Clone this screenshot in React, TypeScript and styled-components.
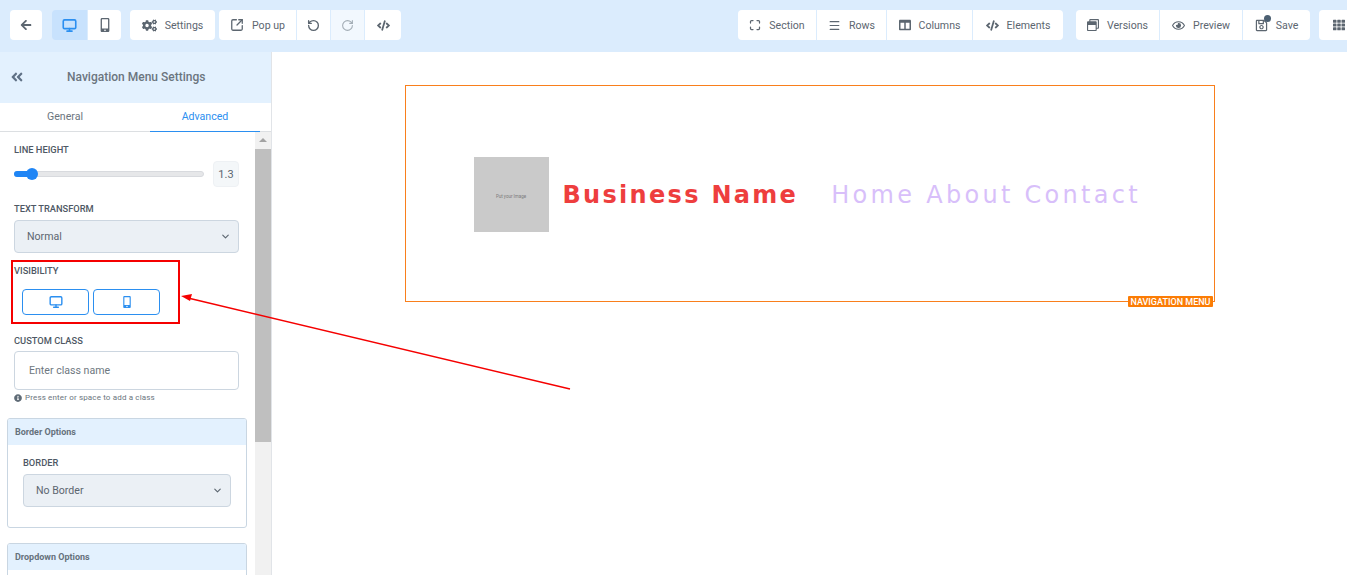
import React from 'react';
import styled, { createGlobalStyle } from 'styled-components';
import {
  ChevronDown,
  Maximize,
  Menu,
  Monitor,
  RotateCcw,
  RotateCw,
  SquareArrowOutUpRight,
} from 'lucide-react';
import {
  FaAngleDoubleLeft,
  FaArrowLeft,
  FaCode,
  FaCogs,
  FaColumns,
  FaInfoCircle,
  FaMobileAlt,
  FaRegEye,
  FaRegSave,
  FaRegWindowRestore,
  FaTh,
} from 'react-icons/fa';

const GlobalStyle = createGlobalStyle`
  html, body {
    margin: 0;
    padding: 0;
    height: 100%;
    overflow: hidden;
    background: #fff;
    font-family: Roboto, "Liberation Sans", sans-serif;
  }
  * { box-sizing: border-box; }
`;

const Page = styled.div`
  position: relative;
  width: 1347px;
  height: 575px;
  overflow: hidden;
`;

const Toolbar = styled.header`
  height: 52px;
  background: #dbecfd;
  display: flex;
  align-items: center;
  padding: 0 0 2px 10px;
  white-space: nowrap;
`;

const Group = styled.div<{ $gap?: number; $left?: number }>`
  display: flex;
  flex: none;
  gap: 1px;
  margin-right: ${(p) => p.$gap ?? 0}px;
  margin-left: ${(p) => p.$left ?? 0}px;
  border-radius: 4px;
  overflow: hidden;
`;

const ToolButton = styled.div<{ $w: number; $active?: boolean; $dim?: boolean }>`
  width: ${(p) => p.$w}px;
  height: 30px;
  flex: none;
  display: flex;
  align-items: center;
  justify-content: center;
  gap: 8px;
  font-size: 10.6px;
  color: #5c6670;
  background: ${(p) => (p.$active ? '#c8e2fd' : p.$dim ? '#f2f8fe' : '#fff')};

  svg {
    flex: none;
    color: ${(p) => (p.$active ? '#2b8ff0' : p.$dim ? '#a3adb6' : '#5c6670')};
  }
`;

const SaveIcon = styled.span`
  position: relative;
  display: flex;

  &::after {
    content: '';
    position: absolute;
    top: -4px;
    right: -3px;
    width: 7px;
    height: 7px;
    border-radius: 50%;
    background: #4c6072;
  }
`;

const Main = styled.main`
  display: flex;
  height: 523px;
`;

const Sidebar = styled.aside`
  width: 272px;
  flex: none;
  border-right: 1px solid #e1e4e8;
  display: flex;
  flex-direction: column;
  overflow: hidden;
`;

const SidebarHead = styled.div`
  height: 51px;
  flex: none;
  background: #e3f1fe;
  display: flex;
  align-items: center;
  padding: 0 0 2px 10px;
  color: #6b757e;

  svg {
    color: #5f7186;
  }
`;

const SidebarTitle = styled.div`
  font-size: 12px;
  font-weight: 500;
  margin-left: 43px;
`;

const Tabs = styled.nav`
  height: 29px;
  flex: none;
  display: flex;
  border-bottom: 1px solid #dcdfe2;
`;

const Tab = styled.div<{ $active?: boolean }>`
  width: ${(p) => (p.$active ? 110 : 130)}px;
  margin-left: ${(p) => (p.$active ? 20 : 0)}px;
  height: 29px;
  font-size: 10.6px;
  line-height: 27px;
  text-align: center;
  color: ${(p) => (p.$active ? '#2b8ff0' : '#6b757e')};
  border-bottom: 1px solid ${(p) => (p.$active ? '#2b8ff0' : 'transparent')};
`;

const SidebarBody = styled.div`
  flex: 1;
  min-height: 0;
  display: flex;
`;

const Panel = styled.div`
  width: 255px;
  flex: none;
  padding: 12px 0 0 14px;
  overflow: hidden;
`;

const Label = styled.div`
  font-size: 9.3px;
  line-height: 12px;
  font-weight: 500;
  color: #4e5864;
`;

const SliderRow = styled.div`
  display: flex;
  align-items: center;
  width: 225px;
  height: 26px;
  margin-top: 5px;
`;

const SliderTrack = styled.div`
  position: relative;
  width: 190px;
  height: 6px;
  border-radius: 3px;
  background: #e6e7e9;
  border: 1px solid #d8dade;
  margin-right: 9px;
`;

const SliderFill = styled.div`
  position: absolute;
  left: -1px;
  top: -1px;
  height: 6px;
  border-radius: 3px;
  background: #1f85f5;
`;

const SliderThumb = styled.div`
  position: absolute;
  left: 11px;
  top: -4px;
  width: 12px;
  height: 12px;
  border-radius: 50%;
  background: #1f85f5;
`;

const SliderValue = styled.div`
  width: 26px;
  height: 26px;
  border-radius: 4px;
  background: #f4f7f9;
  border: 1px solid #eef1f4;
  font-size: 11px;
  color: #5c6670;
  display: flex;
  align-items: center;
  justify-content: center;
`;

const Select = styled.div<{ $w: number; $h: number }>`
  width: ${(p) => p.$w}px;
  height: ${(p) => p.$h}px;
  margin-top: 5px;
  background: #ebf0f5;
  border: 1px solid #ccd6e0;
  border-radius: 4px;
  display: flex;
  align-items: center;
  justify-content: space-between;
  padding: 0 7px 0 12px;
  font-size: 10.6px;
  color: #5c6670;
`;

const Spaced = styled.div<{ $top: number }>`
  margin-top: ${(p) => p.$top}px;
`;

const VisibilityRow = styled.div`
  display: flex;
  gap: 4px;
  margin: 12px 0 0 8px;
`;

const VisibilityButton = styled.div`
  width: 67px;
  height: 26px;
  border: 1px solid #2b8ff0;
  border-radius: 4px;
  color: #2b8ff0;
  display: flex;
  align-items: center;
  justify-content: center;
`;

const TextField = styled.div`
  width: 225px;
  height: 39px;
  margin-top: 4px;
  border: 1px solid #ccd6e0;
  border-radius: 4px;
  display: flex;
  align-items: center;
  padding-left: 14px;
  font-size: 10.6px;
  color: #6e7780;
`;

const Hint = styled.div`
  display: flex;
  align-items: center;
  gap: 3px;
  margin-top: 2px;
  font-size: 8px;
  line-height: 12px;
  letter-spacing: 0.15px;
  color: #6b757e;

  svg {
    color: #5f6b76;
  }
`;

const OptionCard = styled.section<{ $top: number; $h: number }>`
  width: 240px;
  height: ${(p) => p.$h}px;
  margin: ${(p) => p.$top}px 0 0 -7px;
  border: 1px solid #c9d6e2;
  border-radius: 3px;
  overflow: hidden;
  flex: none;
`;

const CardHead = styled.div`
  height: 26px;
  background: #e3f1fe;
  font-size: 9px;
  font-weight: 700;
  line-height: 26px;
  padding-left: 7px;
  color: #66717c;
`;

const CardBody = styled.div`
  padding: 12px 0 0 15px;
`;

const Scrollbar = styled.div`
  width: 16px;
  flex: none;
  background: #f1f1f1;
  display: flex;
  flex-direction: column;
  align-items: center;
`;

const ScrollArrow = styled.div`
  width: 0;
  height: 0;
  margin-top: 6px;
  border-left: 4px solid transparent;
  border-right: 4px solid transparent;
  border-bottom: 4px solid #a3a3a3;
`;

const ScrollThumb = styled.div`
  width: 100%;
  height: 293px;
  margin-top: 7px;
  background: #bfbfbf;
`;

const Canvas = styled.div`
  flex: 1;
  min-width: 0;
  background: #fff;
`;

const Frame = styled.div`
  position: relative;
  width: 810px;
  height: 217px;
  margin: 33px auto 0;
  border: 1px solid #f97f1c;
  padding-left: 68px;
  display: flex;
  align-items: center;
  font-family: "DejaVu Sans", Inter, sans-serif;
`;

const LogoBox = styled.div`
  width: 75px;
  height: 75px;
  flex: none;
  margin-top: 2px;
  padding-top: 4px;
  background: #cacaca;
  display: flex;
  align-items: center;
  justify-content: center;
  font-family: Roboto, sans-serif;
  font-size: 4.5px;
  color: #7b7b7b;
`;

const BrandName = styled.div`
  margin: 2px 0 0 14px;
  font-size: 24px;
  font-weight: 700;
  letter-spacing: 2.3px;
  color: #ee3e3e;
  white-space: nowrap;
`;

const NavLinks = styled.div`
  margin: 2px 0 0 33px;
  font-size: 24px;
  font-weight: 400;
  letter-spacing: 3.3px;
  color: #d8bffa;
  white-space: nowrap;
`;

const FrameTag = styled.div`
  position: absolute;
  right: 1px;
  bottom: -6px;
  height: 11px;
  padding: 0 2px;
  background: #fb7c05;
  border-radius: 1px;
  color: #fff;
  font-family: Roboto, sans-serif;
  font-size: 9px;
  font-weight: 500;
  line-height: 12px;
`;

const Highlight = styled.div`
  position: absolute;
  left: 11px;
  top: 260px;
  width: 169px;
  height: 64px;
  border: 2px solid #f50000;
  pointer-events: none;
`;

const ArrowOverlay = styled.svg`
  position: absolute;
  left: 0;
  top: 0;
  pointer-events: none;
`;

const App = () => {
  return (
    <Page>
      <GlobalStyle />
      <Toolbar>
        <Group $gap={10}>
          <ToolButton $w={32}><FaArrowLeft size={12} /></ToolButton>
        </Group>
        <Group $gap={9}>
          <ToolButton $w={35} $active><Monitor size={15} strokeWidth={2.6} /></ToolButton>
          <ToolButton $w={33}><FaMobileAlt size={14} /></ToolButton>
        </Group>
        <Group $gap={4}>
          <ToolButton $w={85}><FaCogs size={15} />Settings</ToolButton>
        </Group>
        <Group>
          <ToolButton $w={77}><SquareArrowOutUpRight size={14} strokeWidth={2.2} />Pop up</ToolButton>
          <ToolButton $w={33}><RotateCcw size={13} strokeWidth={2.5} /></ToolButton>
          <ToolButton $w={33} $dim><RotateCw size={13} strokeWidth={2} /></ToolButton>
          <ToolButton $w={36}><FaCode size={13} /></ToolButton>
        </Group>
        <Group $left={337} $gap={13}>
          <ToolButton $w={78}><Maximize size={12} strokeWidth={2.5} />Section</ToolButton>
          <ToolButton $w={69}><Menu size={13} strokeWidth={2.2} />Rows</ToolButton>
          <ToolButton $w={85}><FaColumns size={12} />Columns</ToolButton>
          <ToolButton $w={90}><FaCode size={13} />Elements</ToolButton>
        </Group>
        <Group $gap={9}>
          <ToolButton $w={83}><FaRegWindowRestore size={12} />Versions</ToolButton>
          <ToolButton $w={82}><FaRegEye size={13} />Preview</ToolButton>
          <ToolButton $w={67}>
            <SaveIcon><FaRegSave size={13} /></SaveIcon>
            Save
          </ToolButton>
        </Group>
        <Group>
          <ToolButton $w={40}><FaTh size={12} /></ToolButton>
        </Group>
      </Toolbar>
      <Main>
        <Sidebar>
          <SidebarHead>
            <FaAngleDoubleLeft size={14} />
            <SidebarTitle>Navigation Menu Settings</SidebarTitle>
          </SidebarHead>
          <Tabs>
            <Tab>General</Tab>
            <Tab $active>Advanced</Tab>
          </Tabs>
          <SidebarBody>
            <Panel>
              <Label>LINE HEIGHT</Label>
              <SliderRow>
                <SliderTrack>
                  <SliderFill style={{ width: '10%' }} />
                  <SliderThumb />
                </SliderTrack>
                <SliderValue>1.3</SliderValue>
              </SliderRow>
              <Spaced $top={16}><Label>TEXT TRANSFORM</Label></Spaced>
              <Select $w={225} $h={33}>Normal<ChevronDown size={11} strokeWidth={2.5} /></Select>
              <Spaced $top={12}><Label>VISIBILITY</Label></Spaced>
              <VisibilityRow>
                <VisibilityButton><Monitor size={14} strokeWidth={2.4} /></VisibilityButton>
                <VisibilityButton><FaMobileAlt size={12} /></VisibilityButton>
              </VisibilityRow>
              <Spaced $top={20}><Label>CUSTOM CLASS</Label></Spaced>
              <TextField>Enter class name</TextField>
              <Hint><FaInfoCircle size={8} />Press enter or space to add a class</Hint>
              <OptionCard $top={14} $h={110}>
                <CardHead>Border Options</CardHead>
                <CardBody>
                  <Label>BORDER</Label>
                  <Select $w={208} $h={33}>No Border<ChevronDown size={11} strokeWidth={2.5} /></Select>
                </CardBody>
              </OptionCard>
              <OptionCard $top={15} $h={60}>
                <CardHead>Dropdown Options</CardHead>
              </OptionCard>
            </Panel>
            <Scrollbar>
              <ScrollArrow />
              <ScrollThumb />
            </Scrollbar>
          </SidebarBody>
        </Sidebar>
        <Canvas>
          <Frame>
            <LogoBox>Put your Image</LogoBox>
            <BrandName>Business Name</BrandName>
            <NavLinks>Home About Contact</NavLinks>
            <FrameTag>NAVIGATION MENU</FrameTag>
          </Frame>
        </Canvas>
      </Main>
      <Highlight />
      <ArrowOverlay width="1347" height="575">
        <line x1="570" y1="389" x2="188" y2="298" stroke="#f50000" strokeWidth="1.6" />
        <polygon points="181,296 192,294 190,301" fill="#f50000" />
      </ArrowOverlay>
    </Page>
  );
};

export default App;
